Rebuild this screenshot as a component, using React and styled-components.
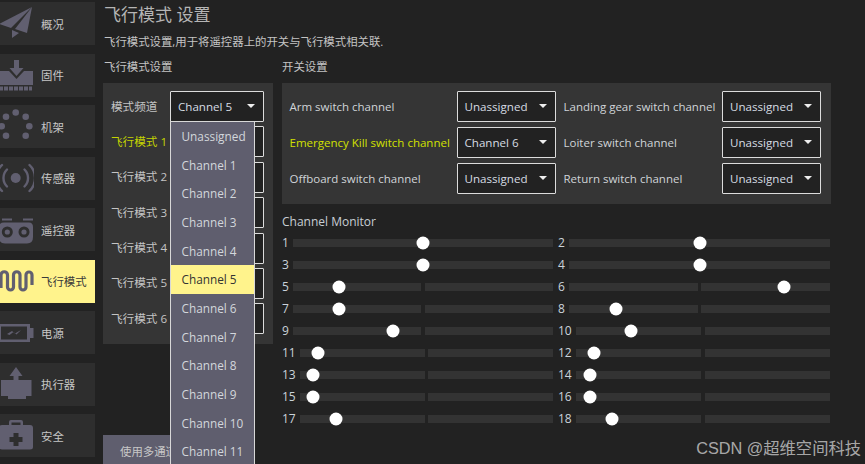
import React from "react";
import styled, { createGlobalStyle } from "styled-components";

const Global = createGlobalStyle`
  html, body { margin: 0; padding: 0; height: 100%; background: #222222; overflow: hidden; }
  body { font-family: "Open Sans", "Noto Sans CJK SC", sans-serif; color: #c9c9c9; }
  #root { height: 100%; }
`;
const Page = styled.div`
  display: flex; width: 865px; height: 464px; overflow: hidden; position: relative; background: #222222;
`;
const Sidebar = styled.nav`
  width: 95px; flex: none; display: flex; flex-direction: column; gap: 8.5px; padding-top: 2px;
`;
const NavItem = styled.div`
  height: 43px; flex: none; display: flex; align-items: center; gap: 7px; overflow: hidden;
  background: ${p => (p.$active ? "#fff38c" : "#2e2e2e")};
  color: ${p => (p.$active ? "#3a3a3a" : "#c6c6c6")};
  font-size: 11.4px; box-sizing: border-box;
`;
const NavIcon = styled.svg`
  width: 36px; height: 40px; flex: none; margin-left: -2px; fill: #615f70; color: #615f70;
`;
const Main = styled.main`
  flex: none; width: 762px; margin-left: 8px; display: flex; flex-direction: column;
`;
const Title = styled.h1`
  margin: 4px 0 0 1px; font-size: 17px; line-height: 22px; font-weight: 400; color: #b5b5b5;
`;
const Description = styled.p`
  margin: 8px 0 0 1px; font-size: 11.4px; line-height: 16px; color: #c4c4c4;
`;
const Columns = styled.div`
  display: flex; gap: 9px; margin-top: 9px; align-items: flex-start;
`;
const LeftColumn = styled.section`
  width: 170px; flex: none; display: flex; flex-direction: column;
`;
const RightColumn = styled.section`
  width: 549px; flex: none; display: flex; flex-direction: column;
`;
const SectionLabel = styled.div`
  font-size: 11.4px; line-height: 16px; margin: 0 0 8px ${p => (p.$flush ? 0 : 1)}px; color: #c4c4c4; height: 16px;
`;
const ModePanel = styled.div`
  height: 261px; box-sizing: border-box; background: #353535; padding: 8px 9px 0 8px;
  display: flex; flex-direction: column; gap: 4.4px;
`;
const ModeRow = styled.div`
  display: flex; align-items: center; justify-content: space-between; height: 31px; flex: none;
  font-size: 11.6px; color: ${p => (p.$alert ? "#c4d400" : "#c4c4c4")};
`;
const ModeLabel = styled.span`
  margin-top: -2px; white-space: nowrap;
`;
const SelectBox = styled.div`
  position: relative; box-sizing: border-box; width: ${p => p.$w || 99}px; height: 31px; flex: none;
  background: #222222; border: 1px solid #dcdcdc; border-radius: 1px;
  display: flex; align-items: center; justify-content: space-between;
  padding: 0 8px 0 7px; font-size: 11.6px; color: #d6dce2;
`;
const Caret = styled.span`
  width: 0; height: 0; border-left: 4.5px solid transparent; border-right: 4.5px solid transparent;
  border-top: 4.5px solid #eeeeee; margin-top: -1px;
`;
const Menu = styled.ul`
  position: absolute; z-index: 3; left: -1px; top: 29px; width: 85px; margin: 0; padding: 0 0 40px;
  box-sizing: border-box; list-style: none; background: #5f5e6e; border: 1px solid #d8d8d8;
`;
const MenuItem = styled.li`
  height: 28.68px; line-height: 28.68px; padding-left: 10.5px; font-size: 11.8px; white-space: nowrap;
  background: ${p => (p.$selected ? "#fff38c" : "transparent")};
  color: ${p => (p.$selected ? "#333333" : "#d3d7dc")};
`;
const MultiButton = styled.div`
  width: 150px; height: 32px; margin-top: 91px; background: #5f5e6e; box-sizing: border-box;
  padding: 9px 0 0 17px; font-size: 11.4px; line-height: 16px; color: #c8c8c8; white-space: nowrap; overflow: hidden;
`;
const SwitchPanel = styled.div`
  height: 121px; box-sizing: border-box; background: #353535; padding: 8px 10px 0 7.5px;
  display: grid; grid-template-columns: 167px 99px 166.5px 99px; row-gap: 5px;
  grid-auto-rows: 31px; align-items: center; margin-left: 0;
`;
const SwitchLabel = styled.div`
  font-size: 11.5px; white-space: nowrap; margin-top: -1px; color: ${p => (p.$alert ? "#d2e000" : "#d0d4d8")};
  padding-left: ${p => (p.$second ? 8 : 0)}px;
`;
const MonitorTitle = styled.div`
  margin-top: 9px; font-size: 12px; line-height: 17px; color: #c8ced4;
`;
const MonitorGrid = styled.div`
  margin-top: 2px; display: grid; grid-template-columns: 271px 272px; column-gap: 5px; grid-auto-rows: 22px;
`;
const MonitorRow = styled.div`
  display: flex; align-items: center; height: 22px;
`;
const RowNumber = styled.span`
  width: ${p => (p.$wide ? 18 : 11)}px; flex: none; font-size: 12px; color: #cbd3da; line-height: 22px;
`;
const Track = styled.div`
  position: relative; flex: 1; height: 8.5px; display: flex; gap: 3.5px;
`;
const Segment = styled.i`
  flex: 1; background: #333333; display: block;
`;
const Knob = styled.b`
  position: absolute; top: 50%; width: 13px; height: 13px; border-radius: 50%; background: #ffffff;
  transform: translate(-50%, -50%); display: block;
`;
const Watermark = styled.div`
  position: absolute; right: 4px; bottom: 7px; font-family: "Liberation Sans", "Noto Sans CJK SC", sans-serif;
  font-size: 16.3px; line-height: 18px; color: rgba(255,255,255,0.62); white-space: nowrap;
`;

const I = ({ children }) => <NavIcon viewBox="-2 0 36 40">{children}</NavIcon>;

const icons = {
  plane: (
    <I>
      <path d="M32 3 L-1 20 L11 24 Z" />
      <path d="M32 3 L15 25 L27 29 Z" />
      <path d="M12 26 L12 34 L19 29 Z" />
    </I>
  ),
  firmware: (
    <I>
      <path d="M14 5h5v8h4.500L16.500 21 9.500 13H14Z" />
      <path d="M-1 16H9l7.500 8L24 16H33V30H-1Z" />
      <path d="M-1 31.500h33v4h-33Z" />
      <path d="M3 31h1v5H3zM8 31h1v5H8zM13 31h1v5h-1zM18 31h1v5h-1zM23 31h1v5h-1zM28 31h1v5h-1z" fill="#2e2e2e" />
    </I>
  ),
  frame: (
    <I>
      {[[15.7, 5.500], [25.700, 9.800], [29.300, 19.200], [25.700, 28.800], [6, 28.800], [6, 9.800], [1.700, 19.200]].map(([cx, cy]) => (
        <circle key={cx + "-" + cy} cx={cx} cy={cy} r="3.300" />
      ))}
    </I>
  ),
  sensor: (
    <I>
      <circle cx="15.700" cy="20" r="5" />
      <g fill="none" stroke="currentColor" strokeWidth="2.400" strokeLinecap="round">
        <path d="M7 11.500a12 12 0 0 0 0 17" />
        <path d="M24.500 11.500a12 12 0 0 1 0 17" />
        <path d="M2 7a18 18 0 0 0 0 26" />
        <path d="M29.500 7a18 18 0 0 1 0 26" />
      </g>
    </I>
  ),
  rc: (
    <I>
      <path d="M2 8.500h10v2H2ZM23 8.500h10v2H23Z" />
      <path d="M4 12.500H29Q33 12.500 33 17V27Q33 33.500 27 33.500H5Q-1 33.500 -1 27V17Q-1 12.500 4 12.500Z" />
      <circle cx="7.300" cy="22" r="5.500" fill="#2e2e2e" />
      <circle cx="24" cy="22" r="5.500" fill="#2e2e2e" />
      <circle cx="7.300" cy="22" r="2.600" />
      <circle cx="24" cy="22" r="2.600" />
    </I>
  ),
  wave: (
    <I>
      <path
        d="M1 27V14a3.250 3.250 0 0 1 6.500 0V26a3 3 0 0 0 6 0V14a3.250 3.250 0 0 1 6.500 0V26a3 3 0 0 0 6 0V14a3 3 0 0 1 6 0V24"
        fill="none" stroke="currentColor" strokeWidth="3.200"
      />
    </I>
  ),
  power: (
    <I>
      <path d="M-2 11H30V29H-2ZM30 15h3.500v10H30Z" />
      <path d="M1 13.500H27V26.500H1Z" fill="#2e2e2e" />
      <path d="M7 21l5-3 3 2.500 6-3.500-4.500 4.500-3-2.500-4 3Z" />
    </I>
  ),
  actuator: (
    <I>
      <path d="M16 3 L22.500 12 H18.500 V16 H31.500 V32 H26 V35 H8 V32 H1 V16 H13.500 V12 H9.500Z" />
    </I>
  ),
  safety: (
    <I>
      <path d="M9 9V6Q9 4 11 4H21Q23 4 23 6V9H20.500V6.500H11.500V9Z" />
      <path d="M2 9H30Q33 9 33 12V31Q33 33.500 30 33.500H2Q-1 33.500 -1 31V12Q-1 9 2 9Z" />
      <path d="M13.500 17H18.500V21H22.500V26H18.500V30H13.500V26H9.500V21H13.500Z" fill="#2e2e2e" />
    </I>
  ),
};

const nav = [
  ["plane", "概况"], ["firmware", "固件"], ["frame", "机架"], ["sensor", "传感器"], ["rc", "遥控器"],
  ["wave", "飞行模式", true], ["power", "电源"], ["actuator", "执行器"], ["safety", "安全"],
];
const channels = ["Unassigned", ...Array.from({ length: 11 }, (_, i) => `Channel ${i + 1}`)];
const switches = [
  ["Arm switch channel", "Unassigned", "Landing gear switch channel", "Unassigned"],
  ["Emergency Kill switch channel", "Channel 6", "Loiter switch channel", "Unassigned", true],
  ["Offboard switch channel", "Unassigned", "Return switch channel", "Unassigned"],
];
const monitor = [50, 50, 50, 50, 17.7, 82.3, 17.7, 18, 38.5, 21.7, 7.1, 7.1, 5.1, 5.4, 5.1, 5.4, 14.2, 14.1];

const Select = ({ value, w, children }) => (
  <SelectBox $w={w}>
    {value}
    <Caret />
    {children}
  </SelectBox>
);

export default function App() {
  return (
    <Page>
      <Global />
      <Sidebar>
        {nav.map(([icon, label, active]) => (
          <NavItem key={label} $active={active}>
            {icons[icon]}
            <span>{label}</span>
          </NavItem>
        ))}
      </Sidebar>
      <Main>
        <Title>飞行模式 设置</Title>
        <Description>飞行模式设置,用于将遥控器上的开关与飞行模式相关联.</Description>
        <Columns>
          <LeftColumn>
            <SectionLabel>飞行模式设置</SectionLabel>
            <ModePanel>
              <ModeRow>
                <ModeLabel>模式频道</ModeLabel>
                <Select value="Channel 5" w={94}>
                  <Menu>
                    {channels.map(c => (
                      <MenuItem key={c} $selected={c === "Channel 5"}>{c}</MenuItem>
                    ))}
                  </Menu>
                </Select>
              </ModeRow>
              {[1, 2, 3, 4, 5, 6].map(n => (
                <ModeRow key={n} $alert={n === 1}>
                  <ModeLabel>飞行模式 {n}</ModeLabel>
                  <Select value="Unassigned" w={94} />
                </ModeRow>
              ))}
            </ModePanel>
            <MultiButton>使用多通道选择</MultiButton>
          </LeftColumn>
          <RightColumn>
            <SectionLabel $flush>开关设置</SectionLabel>
            <SwitchPanel>
              {switches.map(([a, av, b, bv, alert]) => (
                <React.Fragment key={a}>
                  <SwitchLabel $alert={alert}>{a}</SwitchLabel>
                  <Select value={av} />
                  <SwitchLabel $second>{b}</SwitchLabel>
                  <Select value={bv} />
                </React.Fragment>
              ))}
            </SwitchPanel>
            <MonitorTitle>Channel Monitor</MonitorTitle>
            <MonitorGrid>
              {monitor.map((v, i) => (
                <MonitorRow key={i}>
                  <RowNumber $wide={i + 1 >= 10}>{i + 1}</RowNumber>
                  <Track>
                    <Segment />
                    <Segment />
                    <Knob style={{ left: `${v}%` }} />
                  </Track>
                </MonitorRow>
              ))}
            </MonitorGrid>
          </RightColumn>
        </Columns>
      </Main>
      <Watermark>CSDN @超维空间科技</Watermark>
    </Page>
  );
}
